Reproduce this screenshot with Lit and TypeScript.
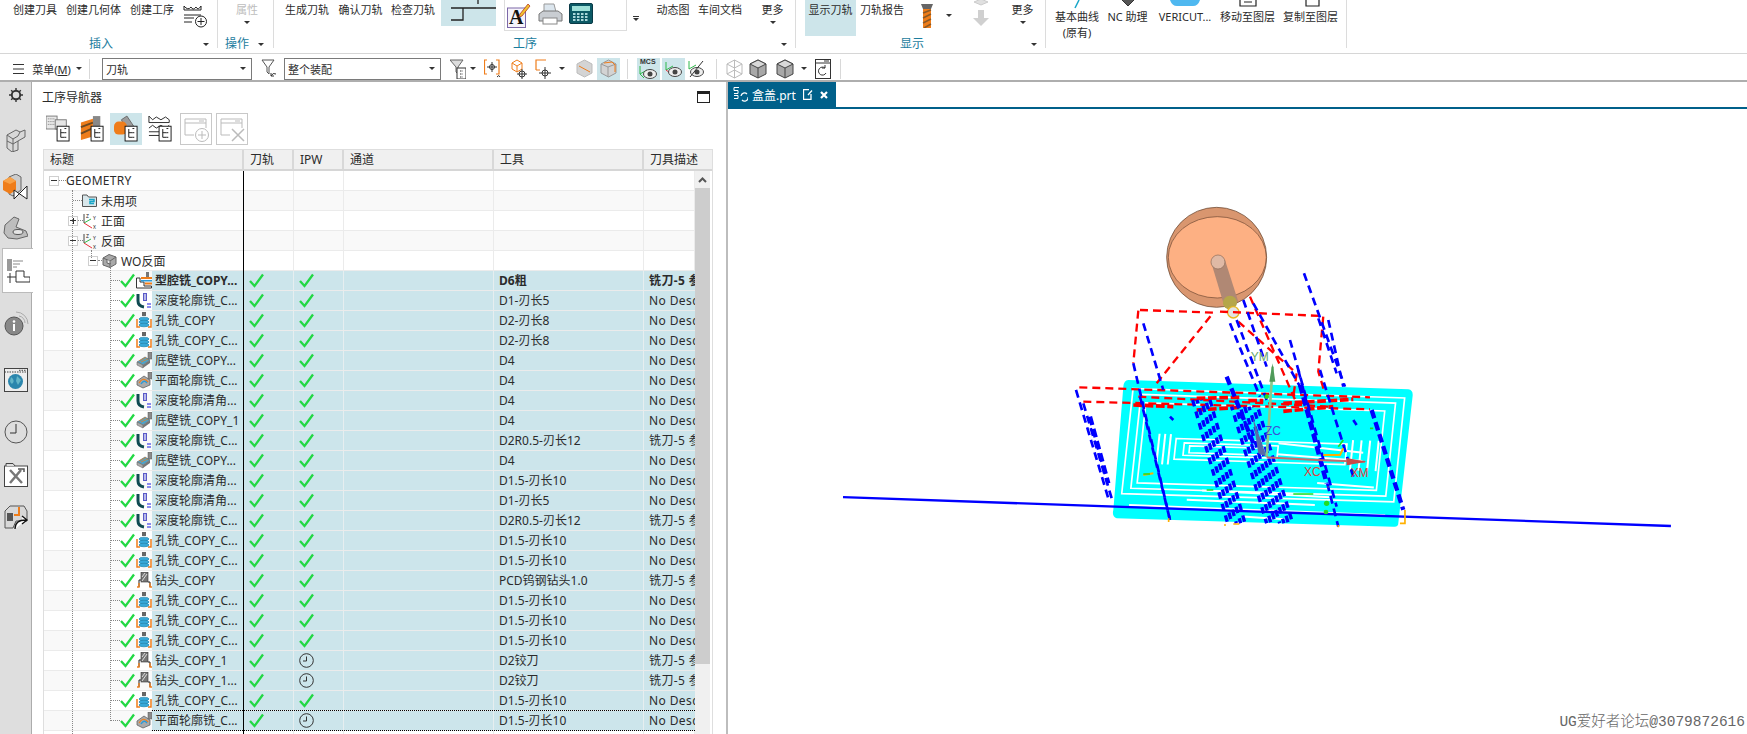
import {LitElement, html, svg, css, nothing} from "lit"
import {customElement} from "lit/decorators.js"

const ORANGE = "#ef7d1a"

const tick = (w = 15, h = 15) => html`<svg class=ic width=${w} height=${h} viewBox="0 0 15 15"><path d="M1 8 L5.5 13 L14 1.5" fill="none" stroke="#22d844" stroke-width="2.300"/></svg>`
const clock = html`<svg class=ic width=15 height=15 viewBox="0 0 15 15"><circle cx="7.5" cy="7.5" r="6.8" fill="none" stroke="#333"/><path d="M7.5 3.5 V8 H4" fill="none" stroke="#333"/></svg>`

// small tree node icons
const icons: Record<string, any> = {
	folder: html`<svg class=ic width=15 height=13 viewBox="0 0 15 13"><path d="M.5 12.5 V1 H5 L6.5 3 H14.5 V12.5 Z" fill="#d8e6ea" stroke="#555"/><path d="M7 5.5 H12 V7.5 H8 V9.5 H12" fill="none" stroke="#18a6c8" stroke-width="1.5"/></svg>`,
	axis: html`<svg class=ic width=14 height=16 viewBox="0 0 14 16"><path d="M1 10 V1" stroke="#444"/><path d="M1 10 L8 6" stroke="#2fb84a"/><path d="M1 10 L9 15" stroke="#e8323c"/><text x="3" y="5" font-size="5" fill="#222">Z</text><text x="10" y="7" font-size="5" fill="#222">Y</text><text x="10" y="15.500" font-size="5" fill="#222">X</text></svg>`,
	block: html`<svg class=ic width=15 height=15 viewBox="0 0 15 15"><path d="M1 5 L7 1.500 L14 4 V11 L8 14.500 L1 12 Z" fill="#a9a9a9" stroke="#666"/><path d="M1 5 L8 8 L14 4 M8 8 V14.500" fill="none" stroke="#666"/><path d="M5 7 V10 L8 11 V8" fill="#eee" stroke="#666"/></svg>`,
	cavity: html`<svg class=ic width=16 height=17 viewBox="0 0 16 17"><path d="M.5 16 V6 H4 V10 H8 V14 H15.500 V16 Z" fill="#fff" stroke="#333"/><rect x="5" y="5" width="11" height="2" fill="${ORANGE}"/><rect x="5" y="8" width="11" height="1.500" fill="#2a9ad8"/><rect x="9" y="10.500" width="7" height="2" fill="${ORANGE}"/><rect x="10" y="0" width="3" height="5" fill="#777"/></svg>`,
	zlevel: html`<svg class=ic width=16 height=16 viewBox="0 0 16 16"><path d="M2 1 V8 Q2 13 8 14" fill="none" stroke="#0f4a52" stroke-width="3"/><rect x="7" y="0" width="4" height="8" fill="#5a5ac8"/><rect x="8" y="1" width="2" height="6" fill="#b8b8e8"/><path d="M11 11 H15 M11 14 H15" stroke="#1a1ae0"/></svg>`,
	hole: html`<svg class=ic width=16 height=17 viewBox="0 0 16 17"><rect x="6" y="0" width="4" height="4" fill="#666"/><path d="M1 7 V15 H4 M15 7 V15 H12" fill="none" stroke="${ORANGE}" stroke-width="1.500"/><ellipse cx="8" cy="7" rx="5" ry="1.800" fill="#38a8d8" stroke="#1c7fa8" stroke-width=".6"/><ellipse cx="8" cy="10" rx="5" ry="1.800" fill="#38a8d8" stroke="#1c7fa8" stroke-width=".6"/><ellipse cx="8" cy="13" rx="5" ry="1.800" fill="#38a8d8" stroke="#1c7fa8" stroke-width=".6"/></svg>`,
	floor: html`<svg class=ic width=16 height=17 viewBox="0 0 16 17"><path d="M1 10 L9 5 L14 8 L7 13 Z" fill="#4fa3c8" stroke="#666" stroke-width=".6"/><path d="M3 9 L10 5.500 M5 10 L12 7" stroke="${ORANGE}" stroke-width=".7"/><path d="M1 10 V13 L7 16 V13 Z" fill="#aaa" stroke="#666" stroke-width=".6"/><path d="M7 13 V16 L14 11 V8 Z" fill="#777"/><rect x="12" y="0" width="4" height="7" fill="#8a8a8a" stroke="#555" stroke-width=".5"/></svg>`,
	planar: html`<svg class=ic width=16 height=17 viewBox="0 0 16 17"><path d="M1 9 L8 4 L14 8 V13 L7 16 L1 13 Z" fill="#aaa" stroke="#555" stroke-width=".7"/><path d="M3 11 Q7 4 12 10" fill="none" stroke="${ORANGE}" stroke-width="1.200"/><path d="M5 12 Q8 7 11 11" fill="none" stroke="#2a9ad8" stroke-width="1.400"/><rect x="12" y="0" width="4" height="7" fill="#8a8a8a" stroke="#555" stroke-width=".5"/></svg>`,
	drill: html`<svg class=ic width=16 height=17 viewBox="0 0 16 17"><rect x="5" y="0" width="7" height="10" fill="#777" stroke="#333" stroke-width=".6"/><path d="M6 9 L11 2 M6 5 L9 1" stroke="#ddd"/><path d="M3 15 V8 H5 M12 10 H14 V15" fill="none" stroke="#222"/><path d="M3 11 V15 H1 M14 11 V15 H16" fill="none" stroke="${ORANGE}" stroke-width="1.300"/></svg>`,
}

// ribbon and toolbar pictures
const art: Record<string, any> = {
	crown: html`<svg width=25 height=24 viewBox="0 0 25 24"><path d="M1 2 L1 6 H18 V2 Q15 7 13 3 Q10 7 8 3 Q5 7 1 2Z M1 11 H18 M1 14 H11 M1 18 H9" fill="none" stroke="#222"/><circle cx="18" cy="17.500" r="5.500" fill="#fff" stroke="#222"/><path d="M18 14 V21 M14.500 17.500 H21.500" stroke="#222"/></svg>`,
	step: html`<svg width=55 height=26 viewBox="0 0 55 26"><path d="M10 8 H55 M22 8 V20 H10 M37 0 V4" fill="none" stroke="#222" stroke-width="1.300"/></svg>`,
	note: html`<svg width=24 height=25 viewBox="0 0 24 25"><rect x=".5" y="5" width="18" height="19.500" fill="#f6f3fa" stroke="#7c68a8"/><text x="2" y="21" font-family="Liberation Serif" font-size="20" font-weight="700" fill="#111">A</text><path d="M13 11 L21 1 L23 3 L15 13 L12 14 Z" fill="#f2c230" stroke="#b53a20" stroke-width=".8"/></svg>`,
	printer: html`<svg width=25 height=22 viewBox="0 0 25 22"><path d="M6 1 H16 L18 9 H6 Z" fill="#dce6ee" stroke="#999"/><path d="M1 11 L5 8 H20 L24 11 V18 H1 Z" fill="#c9cdd2" stroke="#777"/><rect x="5" y="15" width="14" height="6" fill="#fff" stroke="#888"/></svg>`,
	calc: html`<svg width=24 height=21 viewBox="0 0 24 21"><rect x=".5" y=".5" width="23" height="20" rx="1.500" fill="#0c5a66" stroke="#0a3a46"/><rect x="3" y="3" width="18" height="5" fill="#9ee0d8"/><path d="M4 11 H20 M4 14 H20 M4 17 H20" stroke="#dff" stroke-width="1.500" stroke-dasharray="2.500 1.500"/></svg>`,
	endmill: html`<svg width=12 height=24 viewBox="0 0 12 24"><path d="M0 0 H12 L10 5 H2 Z" fill="#666"/><rect x="2" y="5" width="8" height="19" fill="${ORANGE}"/><path d="M2 9 L10 6 M2 14 L10 10 M2 19 L10 15 M3 24 L10 20" stroke="#8a5a28" stroke-width="1.500"/></svg>`,
	downGray: html`<svg width=16 height=16 viewBox="0 0 16 16"><path d="M5 0 H11 V8 H16 L8 16 L0 8 H5 Z" fill="#d0d0d0"/></svg>`,
	upGray: html`<svg width=16 height=8 viewBox="0 0 16 8"><path d="M1 3 L8 0 L15 3 L8 6 Z" fill="#e0e0e0" stroke="#ccc"/></svg>`,
	pen: html`<svg width=12 height=9 viewBox="0 0 12 9"><path d="M8 0 L4 8" stroke="#18a6c8" stroke-width="1.500"/></svg>`,
	tile: html`<svg width=14 height=9 viewBox="0 0 14 9"><path d="M1 0 L7 6 L13 0" fill="#555" stroke="#333"/></svg>`,
	pill: html`<svg width=30 height=9 viewBox="0 0 30 9"><path d="M0 0 H30 Q28 6 23 6 H7 Q2 6 0 0Z" fill="#4fb8f0"/></svg>`,
	sq: html`<svg width=18 height=9 viewBox="0 0 18 9"><path d="M1 0 V6 H17 V0 M5 2 H13" fill="none" stroke="#222" stroke-width="1.200"/></svg>`,
	sq2: html`<svg width=18 height=9 viewBox="0 0 18 9"><path d="M4 0 V6 H17 V0" fill="none" stroke="#222" stroke-width="1.200"/></svg>`,
	burger: html`<svg width=11 height=10 viewBox="0 0 11 10"><path d="M0 .5 H11 M0 5 H11 M0 9.500 H11" stroke="#333"/></svg>`,
	filter: html`<svg width=16 height=20 viewBox="0 0 16 20"><path d="M1 1 H13 L8 8 V15 L6 13 V8 Z" fill="#fff" stroke="#555"/><path d="M10 17 Q12 13 15 15 M10 17 L10 14 M10 17 L13 17" fill="none" stroke="#333"/></svg>`,
	filterDoc: html`<svg width=16 height=20 viewBox="0 0 16 20"><path d="M0 1 H13 L8 8 V15 L6 13 V8 Z" fill="#ddd" stroke="#666"/><rect x="7" y="9" width="9" height="11" fill="#fff" stroke="#333"/><path d="M10 12 H13 M10 15 H13 M10 18 H13" stroke="#333" stroke-dasharray="1.500 1"/></svg>`,
	bracket: html`<svg width=17 height=20 viewBox="0 0 17 20"><path d="M3 1 H0.500 V15 H3 M12 1 H15 V15 H12" fill="none" stroke="${ORANGE}" stroke-width="1.200"/><circle cx="8" cy="8" r="2.500" fill="none" stroke="#333"/><path d="M8 3 V13 M3 8 H13" stroke="#333"/><path d="M13 18 Q15 15 16 18" fill="none" stroke="#333"/></svg>`,
	cubeT: html`<svg width=16 height=20 viewBox="0 0 16 20"><path d="M1 4 L6 1 L11 4 V10 L6 13 L1 10 Z M1 4 L6 7 L11 4 M6 7 V13" fill="#fff" stroke="${ORANGE}"/><circle cx="11" cy="15" r="3" fill="none" stroke="#333"/><path d="M11 10 V20 M6 15 H16" stroke="#333"/></svg>`,
	boxT: html`<svg width=17 height=20 viewBox="0 0 17 20"><path d="M1 11 V1 H11" fill="none" stroke="${ORANGE}" stroke-width="1.200"/><path d="M1 11 H5" stroke="${ORANGE}"/><circle cx="10" cy="14" r="3" fill="none" stroke="#333"/><path d="M10 8 V20 M4 14 H16" stroke="#333"/></svg>`,
	cubeGray: html`<svg width=17 height=19 viewBox="0 0 17 19"><path d="M1 5 L8.500 1 L16 5 V14 L8.500 18 L1 14 Z" fill="#d4d4d4" stroke="#bbb"/><path d="M3 7 L14 13" stroke="${ORANGE}" stroke-width="1"/></svg>`,
	cubeOrange: html`<svg width=17 height=19 viewBox="0 0 17 19"><path d="M1 5 L8.500 1 L16 5 V14 L8.500 18 L1 14 Z" fill="#d3d3d3" stroke="#999"/><path d="M1 5 L8 8 V18 M8 8 L16 5" fill="none" stroke="#999"/><path d="M4 4 L12 3 L15 6 V13" fill="none" stroke="${ORANGE}"/></svg>`,
	mcs: html`<svg width=19 height=22 viewBox="0 0 19 22"><text x="1" y="6" font-size="7" font-family="Liberation Sans" font-weight="700" fill="#333">MCS</text><path d="M1 8 V16 L8 12 M1 16 L5 20" fill="none" stroke="#2fb84a"/><ellipse cx="11" cy="16" rx="6.500" ry="4.500" fill="#eee" stroke="#444"/><circle cx="11" cy="16" r="2.500" fill="#444"/></svg>`,
	eye: html`<svg width=17 height=20 viewBox="0 0 17 20"><path d="M1 3 V11 L8 7" fill="none" stroke="#2fb84a"/><path d="M1 11 L5 14" stroke="#e8323c"/><ellipse cx="10" cy="13" rx="6.500" ry="4.500" fill="#eee" stroke="#444"/><circle cx="10" cy="13" r="2.500" fill="#444"/></svg>`,
	eyeOff: html`<svg width=17 height=22 viewBox="0 0 17 22"><path d="M1 3 V11 L8 7" fill="none" stroke="#2fb84a"/><ellipse cx="9" cy="14" rx="6.500" ry="4.500" fill="#eee" stroke="#444"/><circle cx="9" cy="14" r="2.500" fill="#444"/><path d="M2 19 L15 3" stroke="#333"/></svg>`,
	wire: html`<svg width=17 height=20 viewBox="0 0 17 20"><path d="M1 5 L8.500 1 L16 5 V15 L8.500 19 L1 15 Z M1 5 L8.500 9 L16 5 M8.500 9 V19 M1 15 L8.500 11 L16 15 M8.500 1 V11" fill="none" stroke="#bbb"/></svg>`,
	solid: html`<svg width=18 height=20 viewBox="0 0 18 20"><path d="M1 5 L9 1 L17 5 V15 L9 19 L1 15 Z" fill="#a8a8a8" stroke="#444"/><path d="M1 5 L9 9 L17 5 L9 1 Z" fill="#d8d8d8" stroke="#444"/><path d="M9 9 V19" stroke="#444"/></svg>`,
	refresh: html`<svg width=16 height=20 viewBox="0 0 16 20"><rect x=".5" y=".5" width="15" height="19" fill="#fff" stroke="#333"/><path d="M1 4 H15 M9 2 H14" stroke="#333"/><path d="M10 9 A4 4 0 1 0 11 14 M10 6 V9 H7" fill="none" stroke="#333"/></svg>`,
}

const docBadge = svg`<rect x="12" y="12" width="13" height="16" fill="#fff" stroke="#111"/><path d="M16 15 V24 H20 M16 19 H20 M20 14.500 H22 M20 19 H22 M20 24 H22" fill="none" stroke="#111"/>`
const viewPics: Record<string, any> = {
	points: svg`<rect x="0" y="1" width="12" height="14" fill="#e8e8e8" stroke="#777"/><path d="M2 4 H10 M2 7 H10 M2 10 H10" stroke="#777" stroke-dasharray="1 1"/><rect x="10" y="5" width="12" height="10" fill="#e6e6e6" stroke="#777"/>`,
	mill: svg`<rect x="14" y="1" width="8" height="14" fill="#888"/><path d="M1 8 L14 4 V23 L1 27 Z" fill="${ORANGE}"/><path d="M1 13 L14 8 M1 20 L14 14" stroke="#6d4a22" stroke-width="2"/>`,
	tool: svg`<path d="M8 5 L14 1 L24 16 L16 20 Z" fill="#9c9c9c" stroke="#666"/><rect x="0" y="7" width="14" height="14" rx="5" fill="${ORANGE}"/>`,
	crown: svg`<path d="M1 1 L5 5 L9 2 L14 5 L19 2 L23 5 V8 H1 Z M1 14 L5 11 L9 14 L14 11 L19 14 L23 11 M1 18 H14 M1 22 H12" fill="none" stroke="#222"/>`,
}
const viewIcon = (f: string) => html`<svg class=ic width=24 height=28 viewBox="0 0 26 30">${viewPics[f]}${docBadge}</svg>`

const addBtn = (plus: boolean) => html`<svg class=ic width=32 height=32 viewBox="0 0 32 32"><rect x=".5" y=".5" width="31" height="31" fill="#fff" stroke="#c8c8c8"/><path d="M5 22 V6 H26 V15 M5 10 H26 M5 22 H14 M19 8 H24" fill="none" stroke="#bbb"/>${plus ? svg`<circle cx="22" cy="22" r="6.500" fill="#fff" stroke="#bbb"/><path d="M22 18 V26 M18 22 H26" stroke="#bbb"/>` : svg`<path d="M16 16 L28 28 M28 16 L16 28" stroke="#bbb" stroke-width="1.500"/>`}</svg>`

const side: Record<string, any> = {
	gear: html`<svg width=14 height=14 viewBox="0 0 15 15"><circle cx="7.500" cy="7.500" r="4.500" fill="none" stroke="#333" stroke-width="2"/><path d="M7.500 0 V3 M7.500 12 V15 M0 7.500 H3 M12 7.500 H15 M2.300 2.300 L4 4 M11 11 L12.700 12.700 M12.700 2.300 L11 4 M4 11 L2.300 12.700" stroke="#333" stroke-width="1.500"/></svg>`,
	blocks: html`<svg width=20 height=24 viewBox="0 0 20 24"><path d="M1 7 L10 2 L14 4 L19 2 V9 L12 13 V22 L6 24 L1 20 Z" fill="#d8d8d8" stroke="#666"/><path d="M1 7 L7 11 L12 8 L14 4 M7 11 V24 M1 13 L7 16 L12 13" fill="none" stroke="#666"/></svg>`,
	orange: html`<svg width=25 height=26 viewBox="0 0 25 26"><path d="M6 3 L13 0 L18 3 V16 L10 22 L6 20 Z" fill="#ccc" stroke="#666"/><path d="M0 7 L7 3 L13 7 V16 L7 20 L0 16 Z" fill="${ORANGE}"/><path d="M0 7 L7 10 L13 7 L7 3 Z" fill="#f8a248"/><path d="M11 16 L24 25 V12 L11 25 Z" fill="#fff" stroke="#222"/></svg>`,
	part: html`<svg width=25 height=24 viewBox="0 0 25 24"><path d="M1 17 L2 9 L11 1 L16 3 L13 11 L23 15 L25 20 L14 23 L5 22 Z" fill="#bdbdbd" stroke="#666"/><ellipse cx="15" cy="16" rx="5" ry="2.500" fill="#e5e5e5" stroke="#555"/></svg>`,
	nav: html`<svg width=24 height=24 viewBox="0 0 24 24"><rect x="1" y="0" width="5" height="12" fill="#999"/><path d="M7 2 H17 M7 5 H14 M7 8 H11" stroke="#888"/><path d="M4 24 V14 M1 18 H10 V12 H18 V18 H24 V23 H10 V18" fill="none" stroke="#333"/></svg>`,
	info: html`<svg width=26 height=26 viewBox="0 0 26 26"><path d="M13 1 A12 12 0 0 1 25 13 M16 5 A7 7 0 0 1 22 12" fill="none" stroke="#aaa"/><circle cx="11" cy="15" r="9" fill="#888" stroke="#555"/><circle cx="11" cy="10.500" r="1.300" fill="#fff"/><rect x="10" y="13" width="2" height="7" fill="#fff"/></svg>`,
	globe: html`<svg width=24 height=24 viewBox="0 0 24 24"><rect x=".5" y=".5" width="23" height="23" fill="#eee" stroke="#444"/><path d="M.5 4 H23.500 M15 2.300 H22" stroke="#444" stroke-dasharray="1.500 1"/><circle cx="11.500" cy="13.500" r="7.500" fill="#2b86ad"/><path d="M7 9 Q11 12 9 15 Q7 17 6 13 M13 8 L17 12 L14 17 L12 13 Z" fill="#63b5c8"/></svg>`,
	clock: html`<svg width=24 height=24 viewBox="0 0 24 24"><circle cx="12" cy="12" r="11" fill="none" stroke="#555"/><path d="M12 4 V13 H6" fill="none" stroke="#333"/></svg>`,
	tools: html`<svg width=24 height=24 viewBox="0 0 24 24"><rect x=".5" y="3" width="23" height="20.500" fill="#fff" stroke="#444"/><path d="M2 3 V.5 H9 L11 3" fill="#ddd" stroke="#444"/><path d="M6 7 L18 20 M17 7 L6 20" stroke="#777" stroke-width="2.500"/><path d="M14 6 H20 V9" fill="none" stroke="#555" stroke-width="1.500"/></svg>`,
	machine: html`<svg width=24 height=24 viewBox="0 0 24 24"><path d="M1 23 V6 L6 1 H20 L23 6 V16 H12 L9 23 Z" fill="#d8d8d8" stroke="#555"/><rect x="3" y="8" width="6" height="8" fill="#555"/><path d="M15 2 V10 H10" fill="none" stroke="${ORANGE}" stroke-width="2"/><path d="M11 24 Q11 15 22 15 M18 11 L23 15 L18 19" fill="#fff" stroke="#111" stroke-width="1.300"/></svg>`,
}

type Op = [string, string, string, string, boolean?]
const NOD = "No Desc"
const CUT = "铣刀-5 参数"
const D15 = "D1.5-刃长10"
const ops: Op[] = [
	["cavity", "型腔铣_COPY...", "D6粗", CUT],
	["zlevel", "深度轮廓铣_C...", "D1-刃长5", NOD],
	["hole", "孔铣_COPY", "D2-刃长8", NOD],
	["hole", "孔铣_COPY_C...", "D2-刃长8", NOD],
	["floor", "底壁铣_COPY...", "D4", NOD],
	["planar", "平面轮廓铣_C...", "D4", NOD],
	["zlevel", "深度轮廓清角...", "D4", NOD],
	["floor", "底壁铣_COPY_1", "D4", NOD],
	["zlevel", "深度轮廓铣_C...", "D2R0.5-刃长12", CUT],
	["floor", "底壁铣_COPY...", "D4", NOD],
	["zlevel", "深度轮廓清角...", D15, NOD],
	["zlevel", "深度轮廓清角...", "D1-刃长5", NOD],
	["zlevel", "深度轮廓铣_C...", "D2R0.5-刃长12", CUT],
	["hole", "孔铣_COPY_C...", D15, NOD],
	["hole", "孔铣_COPY_C...", D15, NOD],
	["drill", "钻头_COPY", "PCD钨钢钻头1.0", CUT],
	["hole", "孔铣_COPY_C...", D15, NOD],
	["hole", "孔铣_COPY_C...", D15, NOD],
	["hole", "孔铣_COPY_C...", D15, NOD],
	["drill", "钻头_COPY_1", "D2铰刀", CUT, true],
	["drill", "钻头_COPY_1...", "D2铰刀", CUT, true],
	["hole", "孔铣_COPY_C...", D15, NOD],
	["planar", "平面轮廓铣_C...", D15, NOD, true],
]

// each entry: left edge on the page, content, size. the gaps between them are computed
function flow(start: number, slots: any[], horizontal = true) {
	let pos = start
	return slots.map(([at, content, size]) => {
		const gap = at - pos
		pos = at + (size ?? 0)
		return html`<div class=slot style="${horizontal ? "margin-left" : "margin-top"}:${gap}px;${size ? `${horizontal ? "width" : "height"}:${size}px` : ""}">${content}</div>`
	})
}

const arrow = html`<i class=arrow></i>`
const label = (t: string) => html`<span class=lab>${t}</span>`
const more = (t: string) => html`<span class=lab>${t}</span><i class="arrow under"></i>`
const over = (pic: any, t: any) => html`<div class=sliver>${pic}</div><span class="lab two">${t}</span>`
const cap = (t: string) => html`<span class=cap>${t}</span>`

const groups = [
	{x: 0, w: 218, items: [
		[13, label("创建刀具"), 44], [66, label("创建几何体"), 55], [130, label("创建工序"), 44], [183, html`<div class=pad4>${art.crown}</div>`, 25],
	], caps: [[89, cap("插入"), 24], [203, arrow, 6]]},
	{x: 218, w: 56, items: [
		[235, html`<span class="lab off">属性</span><i class="arrow under"></i>`, 24],
	], caps: [[225, cap("操作"), 24], [258, arrow, 6]]},
	{x: 274, w: 522, items: [
		[285, label("生成刀轨"), 44], [338, label("确认刀轨"), 45], [391, label("检查刀轨"), 44],
		[441, html`<div class=hl-step>${art.step}</div>`, 55],
		[504, html`<div class=gallery><div class=g1>${art.note}</div><div class=g2>${art.printer}</div><div class=g3>${art.calc}</div></div>`, 123],
		[632, html`<div class=spin><i class=bar></i><i class=arrow></i></div>`, 8],
		[656, label("动态图"), 34], [698, label("车间文档"), 44], [761, more("更多"), 23],
	], caps: [[513, cap("工序"), 24], [781, arrow, 6]]},
	{x: 796, w: 250, items: [
		[805, html`<div class=hl-tall>显示刀轨</div>`, 51], [860, label("刀轨报告"), 44],
		[921, html`<div class=pad4>${art.endmill}</div>`, 12], [946, html`<div class=pad15>${arrow}</div>`, 6],
		[973, html`<div class=stack>${art.upGray}${art.downGray}</div>`, 16], [1011, more("更多"), 23],
	], caps: [[900, cap("显示"), 24], [1031, arrow, 6]]},
	{x: 1046, w: 301, items: [
		[1055, over(art.pen, html`基本曲线<br><span class=orig>(原有)</span>`), 44],
		[1107, over(art.tile, "NC 助理"), 41], [1158, over(art.pill, "VERICUT..."), 54],
		[1220, over(art.sq, "移动至图层"), 55], [1283, over(art.sq2, "复制至图层"), 55],
	], caps: []},
]

const toolbar: any[] = [
	[13, art.burger, 11], [30, html`<span class=menu>菜单(<u>M</u>)</span>`, 43], [76, arrow, 6], [89, html`<i class=vsep></i>`, 1],
	[102, html`<div class="combo short"><span>刀轨</span>${arrow}</div>`, 150],
	[261, art.filter, 16],
	[284, html`<div class="combo long"><span>整个装配</span>${arrow}</div>`, 157],
	[450, art.filterDoc, 16], [470, arrow, 6], [484, art.bracket, 17], [511, art.cubeT, 16], [535, art.boxT, 17], [559, arrow, 6],
	[576, art.cubeGray, 17], [597, html`<div class=on>${art.cubeOrange}</div>`, 23],
	[627, html`<i class=vsep></i>`, 1],
	[637, html`<div class=on>${art.mcs}</div>`, 23], [662, html`<div class=on>${art.eye}</div>`, 23], [688, art.eyeOff, 17],
	[716, html`<i class=vsep></i>`, 1],
	[726, art.wire, 17], [749, art.solid, 18], [776, art.solid, 18], [801, arrow, 6], [815, art.refresh, 16],
	[840, html`<i class=vsep></i>`, 1],
]

// the part as it appears on the graphics window. coordinates are 3x page pixels around (1000,190)
const corners = [[385, 570], [1238, 600], [1195, 1010], [340, 985]]
function onPlate(u: number, v: number) {
	const top = [corners[0][0] + (corners[1][0] - corners[0][0]) * u, corners[0][1] + (corners[1][1] - corners[0][1]) * u]
	const bot = [corners[3][0] + (corners[2][0] - corners[3][0]) * u, corners[3][1] + (corners[2][1] - corners[3][1]) * u]
	return `${top[0] + (bot[0] - top[0]) * v},${top[1] + (bot[1] - top[1]) * v}`
}
const loop = (a: number, b: number, c: number, d: number) => [onPlate(a, b), onPlate(c, b), onPlate(c, d), onPlate(a, d)].join(" ")

const whiteLoops = [
	[.02, .06, .975, .82], [.05, .1, .945, .78], [.07, .16, .91, .74], [.19, .41, .79, .56], [.22, .44, .55, .53], [.24, .46, .5, .51],
]
const whiteSegs = [
	[.13, .38, .13, .6], [.15, .38, .15, .6], [.17, .38, .17, .6], [.81, .38, .81, .6], [.84, .38, .84, .6], [.87, .38, .87, .6], [.9, .38, .9, .6],
	[.55, .42, .85, .47], [.55, .5, .85, .53], [.3, .78, .75, .8], [.25, .85, .7, .86], [.05, .9, .95, .92], [.45, .96, .6, .97], [.7, .7, .9, .72],
]
const blueThin = [
	[912, 250, 1035, 590], [430, 400, 490, 600], [420, 620, 510, 990], [400, 520, 510, 990], [228, 600, 325, 925], [250, 640, 335, 925],
	[690, 400, 780, 620], [730, 330, 800, 530], [760, 340, 900, 590], [870, 450, 1010, 950], [955, 385, 1010, 550], [985, 390, 1030, 590],
	[960, 540, 1060, 860], [895, 540, 1015, 1010], [510, 680, 520, 690], [1060, 690, 1070, 705], [710, 390, 800, 630],
]
const blueThick = [
	[900, 585, 980, 880], [1115, 660, 1210, 960], [270, 680, 325, 880], [680, 560, 760, 760],
]
// two bundles of tool moves packed side by side
const bundle = (from: number, to: number, top: number, run: number) => {
	const out: number[][] = []
	for (let x = from; x <= to; x += 13) out.push([x, top, x + run, 1000])
	return out
}
const blueDense = [...bundle(578, 640, 630, 105), ...bundle(695, 775, 650, 105)]
const redDash = [
	"420,360 640,368 470,580", "415,362 400,520", "660,365 970,378 955,545 975,610", "238,592 1110,622", "250,635 1110,658",
	"715,395 890,550 880,620", "750,320 890,640", "415,620 990,650",
]
const redHeavy = [
	"590,625 720,622", "590,660 720,652", "745,632 790,632", "850,640 1060,628", "850,664 1000,650", "400,645 520,650",
]

const drawing = html`<svg class=canvas viewBox="0 0 1019 625" width=1019 height=625>
	<g transform="translate(272 81) scale(.3333)">
		<path d="M385 570 L1225 598 Q1240 600 1238 618 L1195 1000 Q1195 1012 1180 1010 L350 985 Q335 980 340 960 L370 590 Q372 570 385 570Z" fill="#00ffff"/>
		${whiteLoops.map(l => svg`<polygon points=${loop(l[0], l[1], l[2], l[3])} fill="none" stroke="#fff" stroke-width="5"/>`)}
		${whiteSegs.map(s => svg`<polyline points="${onPlate(s[0], s[1])} ${onPlate(s[2], s[3])}" fill="none" stroke="#fff" stroke-width="6"/>`)}
		<line x1="-471" y1="921.600" x2="2013" y2="1008" stroke="#0000ff" stroke-width="7"/>
		<path d="M650 52 A150 150 0 0 1 650 352 A150 150 0 0 1 650 52Z" fill="#d9966f" stroke="#5a3c28" stroke-width="2"/>
		<ellipse cx="652" cy="202" rx="147" ry="122" fill="#fdb083" stroke="#6b4630" stroke-width="2"/>
		<path d="M633 215 L675 210 L715 335 L672 345 Z" fill="#b08874"/>
		<circle cx="654" cy="216" r="21" fill="#dfb9a5" stroke="#8a6a58" stroke-width="2"/>
		<circle cx="690" cy="338" r="21" fill="#b5a64a"/>
		<circle cx="700" cy="367" r="17" fill="#e3e3e3" stroke="#e8b820" stroke-width="4"/>
		${redDash.map(p => svg`<polyline points=${p} fill="none" stroke="#ff0000" stroke-width="7" stroke-dasharray="24 15"/>`)}
		${redHeavy.map(p => svg`<polyline points=${p} fill="none" stroke="#ff0000" stroke-width="11" stroke-dasharray="26 8"/>`)}
		${blueThin.map(l => svg`<line x1=${l[0]} y1=${l[1]} x2=${l[2]} y2=${l[3]} stroke="#0000ff" stroke-width="8" stroke-dasharray="24 15"/>`)}
		${blueThick.map(l => svg`<line x1=${l[0]} y1=${l[1]} x2=${l[2]} y2=${l[3]} stroke="#0000ff" stroke-width="13" stroke-dasharray="26 12"/>`)}
		${blueDense.map((l, i) => svg`<line x1=${l[0]} y1=${l[1]} x2=${l[2]} y2=${l[3]} stroke="#0000ff" stroke-width="10" stroke-dasharray="20 16" stroke-dashoffset=${i * 9}/>`)}
		<path d="M758 680 L800 800 L775 790 Z" fill="#5a6aa8"/>
		<line x1="818" y1="530" x2="800" y2="800" stroke="#8cc88c" stroke-width="8"/>
		<path d="M818 520 L826 575 L808 575 Z" fill="#4f9a5a"/>
		<path d="M800 802 Q950 812 1095 815" fill="none" stroke="#c86a6a" stroke-width="6"/>
		<path d="M1100 815 L1040 804 L1040 826 Z" fill="#c84a4a"/>
		<path d="M970 795 H1020 L1030 775 M430 855 L460 850 M985 890 L985 892" fill="none" stroke="#ffb000" stroke-width="6"/>
		<path d="M1015 770 L1030 750 M430 852 H450 M620 900 H640 M880 912 H940 M1110 715 H1120" fill="none" stroke="#22dd22" stroke-width="5"/>
		<circle cx="980" cy="940" r="8" fill="#22dd22"/><circle cx="978" cy="966" r="7" fill="#22dd22"/><circle cx="800" cy="620" r="7" fill="#22dd22"/>
		<path d="M506 985 V996 M672 1005 h6 M700 1002 h18 M1015 1005 V1012 M1200 1000 H1215 V960" fill="none" stroke="#ffb000" stroke-width="5"/>
		<text x="752" y="512" font-size="36" font-family="Liberation Sans" fill="#6aa86a">YM</text>
		<text x="795" y="735" font-size="36" font-family="Liberation Sans" fill="#3c50d8">ZC</text>
		<text x="912" y="858" font-size="36" font-family="Liberation Sans" fill="#e04040">XC</text>
		<text x="1052" y="860" font-size="36" font-family="Liberation Sans" fill="#e04040">XM</text>
	</g>
</svg>`

@customElement("app-root")
export class AppRoot extends LitElement {

	static styles = css`
	:host {
		display: block;
		width: 1747px;
		height: 734px;
		overflow: hidden;
		background: #fff;
		font-family: "Noto Sans", "Noto Sans CJK SC", sans-serif;
		font-size: 12px;
		color: #2b2b2b;
	}
	svg {
		display: block;
		flex: none;
	}
	.ribbon {
		display: flex;
		height: 53px;
		border-bottom: 1px solid #d6d6d6;
		overflow: hidden;
		font-size: 11px;
	}
	.group {
		flex: none;
		box-sizing: border-box;
		height: 48px;
		border-right: 1px solid #dcdcdc;
		display: flex;
		flex-direction: column;
	}
	.items {
		display: flex;
		height: 37px;
		flex: none;
		align-items: flex-start;
	}
	.caps {
		display: flex;
		height: 14px;
		flex: none;
		align-items: center;
		overflow: visible;
	}
	.slot {
		flex: none;
		display: flex;
		flex-direction: column;
		align-items: center;
		white-space: nowrap;
	}
	.lab {
		line-height: 19px;
		text-align: center;
	}
	.lab.two {
		line-height: 16px;
	}
	.orig {
		display: block;
	}
	.sliver {
		height: 9px;
		overflow: hidden;
	}
	.off {
		color: #bdbdbd;
	}
	.cap {
		color: #1c7d9e;
		line-height: 14px;
		font-size: 12px;
	}
	.arrow {
		display: block;
		width: 0;
		height: 0;
		border-left: 3px solid transparent;
		border-right: 3px solid transparent;
		border-top: 3px solid #333;
	}
	.arrow.under {
		margin-top: 2px;
	}
	.pad4 {
		padding-top: 4px;
	}
	.pad15 {
		padding-top: 14px;
	}
	.hl-step {
		background: #cde5ea;
		height: 26px;
	}
	.gallery {
		box-sizing: border-box;
		width: 123px;
		height: 31px;
		border: 1px solid #dddddd;
		border-top: 0;
		display: flex;
		align-items: flex-start;
		padding: 3px 0 0 2px;
	}
	.g2 {
		margin-left: 7px;
	}
	.g3 {
		margin-left: 6px;
	}
	.spin {
		padding-top: 16px;
		display: flex;
		flex-direction: column;
		align-items: center;
		gap: 1px;
	}
	.bar {
		display: block;
		width: 6px;
		height: 1px;
		background: #333;
	}
	.hl-tall {
		background: #cde5ea;
		width: 51px;
		height: 36px;
		line-height: 19px;
		text-align: center;
	}
	.stack {
		display: flex;
		flex-direction: column;
		gap: 3px;
		margin-top: -1px;
	}
	.toolbar {
		display: flex;
		align-items: center;
		height: 23px;
		padding-top: 3px;
		border-bottom: 2px solid #aeaeae;
		font-size: 11px;
	}
	.vsep {
		display: block;
		width: 1px;
		height: 20px;
		background: #d8d8d8;
	}
	.combo {
		box-sizing: border-box;
		height: 22px;
		border: 1px solid #7a7a7a;
		display: flex;
		align-items: center;
		justify-content: space-between;
		padding: 0 5px 0 3px;
	}
	.combo.short {
		width: 150px;
	}
	.combo.long {
		width: 157px;
	}
	.on {
		background: #cde5ea;
		width: 23px;
		height: 22px;
		display: flex;
		align-items: center;
		justify-content: center;
		overflow: hidden;
	}
	.main {
		display: flex;
		height: 652px;
	}
	.rail {
		flex: none;
		width: 31px;
		background: #dedede;
		border-right: 1px solid #acacac;
		display: flex;
		flex-direction: column;
		align-items: center;
	}
	.rail .slot {
		justify-content: center;
	}
	.rail .active {
		box-sizing: border-box;
		width: 31px;
		height: 45px;
		margin-left: 2px;
		background: #fff;
		border: 1px solid #bbbbbb;
		border-right: 0;
		display: flex;
		align-items: center;
		justify-content: center;
		position: relative;
		left: 1px;
	}
	.nav {
		flex: none;
		width: 694px;
		border-right: 2px solid #bdbdbd;
		display: flex;
		flex-direction: column;
	}
	.nav-title {
		display: flex;
		justify-content: space-between;
		align-items: center;
		box-sizing: border-box;
		height: 31px;
		padding: 0 16px 2px 10px;
		flex: none;
	}
	.maxbox {
		width: 11px;
		height: 8px;
		border: 1px solid #222;
		border-top-width: 3px;
	}
	.nav-tools {
		display: flex;
		height: 32px;
		align-items: center;
		margin-bottom: 4px;
		flex: none;
	}
	.nav-tools .slot {
		justify-content: center;
	}
	.nav-tools .on {
		width: 32px;
		height: 32px;
		justify-content: flex-start;
		padding-left: 4px;
		box-sizing: border-box;
	}
	.table {
		margin-left: 11px;
		width: 670px;
		flex: none;
		box-sizing: border-box;
		border: 1px solid #dedede;
		border-bottom: 0;
		height: 585px;
		overflow: hidden;
	}
	.head {
		display: grid;
		grid-template-columns: 200px 50px 50px 150px 150px 1fr;
		height: 19px;
		background: #f0f0f0;
		border-bottom: 2px solid #d6d6d6;
		line-height: 20px;
	}
	.head div {
		padding-left: 6px;
		border-right: 2px solid #d8d8d8;
		white-space: nowrap;
		overflow: hidden;
	}
	.head div:last-child {
		border-right: 0;
	}
	.tbody {
		display: flex;
		height: 563px;
		overflow: hidden;
	}
	.rows {
		width: 651px;
		flex: none;
		position: relative;
	}
	.row {
		display: grid;
		grid-template-columns: 200px 50px 50px 150px 150px 51px;
		box-sizing: border-box;
		height: 20px;
		background: #fff;
		border-bottom: 1px solid #ebebeb;
		position: relative;
	}
	.row.alt {
		background: #f9f9f9;
	}
	.cell {
		box-sizing: border-box;
		border-right: 1px solid #ebebeb;
		display: flex;
		align-items: center;
		padding-left: 5px;
		white-space: nowrap;
		overflow: hidden;
		line-height: 19px;
	}
	.cell.desc {
		letter-spacing: .4px;
		border-right: 0;
	}
	.row.sel .cell {
		background: #cce5eb;
		border-right-color: #e6eef0;
	}
	.row.bold {
		font-weight: 700;
	}
	.row .tree {
		box-sizing: border-box;
		padding-right: 1px;
		display: flex;
		align-items: center;
		white-space: nowrap;
		overflow: hidden;
	}
	.lv0 { padding-left: 5px; }
	.lv1 { padding-left: 29px; }
	.lv2 { padding-left: 24px; }
	.lv3 { padding-left: 44px; }
	.lv4 { padding-left: 67px; }
	.pm {
		box-sizing: border-box;
		flex: none;
		width: 10px;
		height: 10px;
		border: 1px solid #cfcfcf;
		background: #fff;
		display: flex;
		align-items: center;
		justify-content: center;
		position: relative;
	}
	.pm::before {
		content: "";
		width: 6px;
		height: 1px;
		background: #333;
	}
	.pm.plus::after {
		content: "";
		position: absolute;
		width: 1px;
		height: 6px;
		background: #333;
	}
	.stub {
		flex: none;
		border-top: 1px dotted #888;
		height: 0;
	}
	.lv0 .stub { width: 7px; }
	.lv1 .stub { width: 9px; }
	.lv2 .stub { width: 5px; }
	.lv3 .stub { width: 4px; }
	.lv4 .stub { width: 9px; }
	.tree .name {
		margin-left: 4px;
	}
	.lv0 .name {
		margin-left: 0;
		letter-spacing: .3px;
	}
	.tree .ic {
		flex: none;
	}
	.tree .opic {
		margin-left: 1px;
		flex: none;
	}
	.tree .label {
		flex: 1;
		align-self: stretch;
		background: #cce5eb;
		padding-left: 3px;
		line-height: 19px;
		overflow: hidden;
	}
	.focus {
		position: absolute;
		left: 108px;
		right: 0;
		top: -1px;
		bottom: -1px;
		border-top: 1px dotted #000;
		border-bottom: 1px dotted #000;
		pointer-events: none;
	}
	.vdots {
		position: absolute;
		border-left: 1px dotted #888;
		width: 0;
		pointer-events: none;
	}
	.v1 { left: 28px; top: 19px; bottom: 0; }
	.v2 { left: 47px; top: 79px; height: 8px; }
	.v3 { left: 66px; top: 90px; height: 460px; }
	.vline {
		position: absolute;
		left: 199px;
		top: 0;
		bottom: 0;
		width: 1px;
		background: #000;
	}
	.sbar {
		flex: none;
		width: 15px;
		background: #f0f0f0;
		display: flex;
		flex-direction: column;
	}
	.sup {
		height: 17px;
		display: flex;
		align-items: center;
		justify-content: center;
		flex: none;
	}
	.thumb {
		height: 476px;
		background: #cdcdcd;
		flex: none;
	}
	.view {
		flex: 1;
		display: flex;
		flex-direction: column;
		position: relative;
		min-width: 0;
	}
	.tabs {
		height: 27px;
		flex: none;
		border-bottom: 2px solid #00608a;
		box-sizing: border-box;
	}
	.tab {
		width: 108px;
		height: 25px;
		background: #00608a;
		color: #fff;
		display: flex;
		align-items: center;
		padding-left: 5px;
		box-sizing: border-box;
	}
	.tab .title {
		margin: 0 7px 0 4px;
	}
	.tab .x {
		margin-left: 7px;
	}
	.canvas {
		flex: none;
	}
	.mark {
		position: absolute;
		right: 2px;
		bottom: 4px;
		font-family: "Liberation Mono", "Noto Sans CJK SC", monospace;
		font-size: 14.500px;
		font-weight: 300;
		color: #666;
		white-space: nowrap;
	}
	`

	private treeRow(i: number, lv: string, pm: string, icon: any, name: string) {
		return html`<div class="row ${i % 2 ? "alt" : ""}">
			<div class="tree ${lv}">
				${pm ? html`<i class="pm ${pm}"></i>` : nothing}
				<i class=stub></i>
				${icon ?? nothing}
				<span class=name>${name}</span>
			</div>
			<div class=cell></div><div class=cell></div><div class=cell></div><div class=cell></div><div class=cell></div>
		</div>`
	}

	private opRow(op: Op, i: number, last: boolean) {
		const [kind, name, tool, desc, waiting] = op
		const idx = i + 5
		return html`<div class="row sel ${idx % 2 ? "alt" : ""} ${i === 0 ? "bold" : ""}">
			<div class="tree lv4">
				<i class=stub></i>
				${tick()}
				<span class=opic>${icons[kind]}</span>
				<span class=label>${name}</span>
			</div>
			<div class=cell>${tick()}</div>
			<div class=cell>${waiting ? clock : tick()}</div>
			<div class=cell></div>
			<div class=cell>${tool}</div>
			<div class="cell desc">${desc}</div>
			${last ? html`<div class=focus></div>` : nothing}
		</div>`
	}

	render() {
		const rail: any[] = [
			[87, side.gear, 15],
			[128, side.blocks, 24],
			[174, side.orange, 26],
			[216, side.part, 24],
			[248, html`<div class=active>${side.nav}</div>`, 45],
			[311, side.info, 26],
			[368, side.globe, 24],
			[420, side.clock, 24],
			[463, side.tools, 24],
			[505, side.machine, 24],
		]
		const tools: any[] = [
			[46, viewIcon("points"), 24],
			[80, viewIcon("mill"), 24],
			[110, html`<div class=on>${viewIcon("tool")}</div>`, 32],
			[148, viewIcon("crown"), 24],
			[180, addBtn(true), 32],
			[216, addBtn(false), 32],
		]
		return html`
			<div class=ribbon>
				${groups.map(g => html`<div class=group style="width:${g.w}px">
					<div class=items>${flow(g.x, g.items)}</div>
					<div class=caps>${flow(g.x, g.caps)}</div>
				</div>`)}
			</div>
			<div class=toolbar>${flow(0, toolbar)}</div>
			<div class=main>
				<div class=rail>${flow(82, rail, false)}</div>
				<div class=nav>
					<div class=nav-title><span>工序导航器</span><i class=maxbox></i></div>
					<div class=nav-tools>${flow(32, tools)}</div>
					<div class=table>
						<div class=head><div>标题</div><div>刀轨</div><div>IPW</div><div>通道</div><div>工具</div><div>刀具描述</div></div>
						<div class=tbody>
							<div class=rows>
								${this.treeRow(0, "lv0", "minus", null, "GEOMETRY")}
								${this.treeRow(1, "lv1", "", icons.folder, "未用项")}
								${this.treeRow(2, "lv2", "plus", icons.axis, "正面")}
								${this.treeRow(3, "lv2", "minus", icons.axis, "反面")}
								${this.treeRow(4, "lv3", "minus", icons.block, "WO反面")}
								${ops.map((op, i) => this.opRow(op, i, i === ops.length - 1))}
								${this.treeRow(28, "lv2", "", icons.axis, "")}
								<i class="vdots v1"></i>
								<i class="vdots v2"></i>
								<i class="vdots v3"></i>
								<i class=vline></i>
							</div>
							<div class=sbar>
								<div class=sup><svg width=9 height=6 viewBox="0 0 9 6"><path d="M1 5 L4.500 1.500 L8 5" fill="none" stroke="#555" stroke-width="2"/></svg></div>
								<div class=thumb></div>
							</div>
						</div>
					</div>
				</div>
				<div class=view>
					<div class=tabs>
						<div class=tab>
							<svg width=15 height=15 viewBox="0 0 15 15"><path d="M6 .5 H1 V3.500 H5 V6.500 H1 M1 8.500 H5 V11.500 H1" fill="none" stroke="#fff"/><path d="M8 9 A3.500 3.500 0 0 1 14 7 M15 10 A3.500 3.500 0 0 1 9 13" fill="none" stroke="#fff" stroke-width="1.200"/></svg>
							<span class=title>盒盖.prt</span>
							<svg width=10 height=11 viewBox="0 0 10 11"><path d="M6 .5 H.5 V10.500 H8 V5 M5 6 L9 1.500" fill="none" stroke="#fff" stroke-width="1.300"/></svg>
							<svg class=x width=8 height=8 viewBox="0 0 8 8"><path d="M1 1 L7 7 M7 1 L1 7" stroke="#fff" stroke-width="2.200"/></svg>
						</div>
					</div>
					${drawing}
					<div class=mark>UG爱好者论坛@3079872616</div>
				</div>
			</div>
		`
	}
}
